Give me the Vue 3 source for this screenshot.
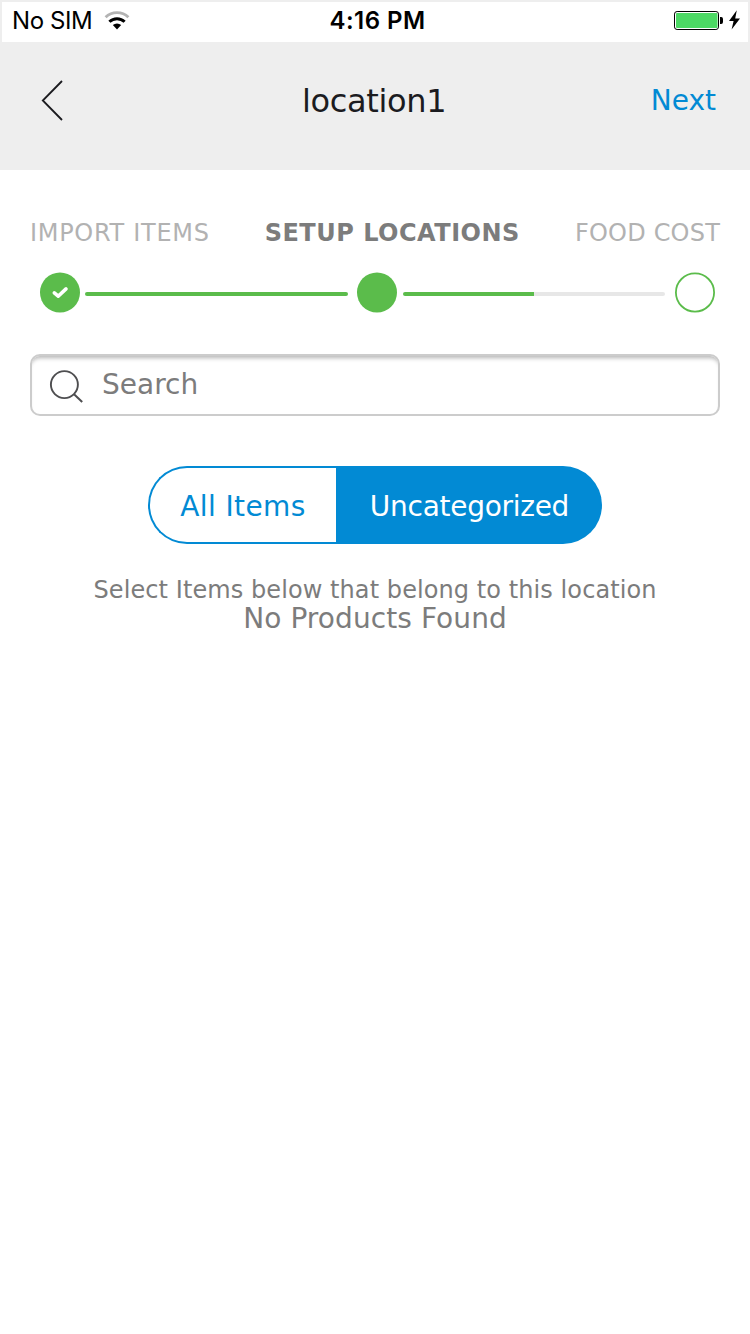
<script setup>
const steps = [
  { label: 'IMPORT ITEMS', name: 'import' },
  { label: 'SETUP LOCATIONS', name: 'setup' },
  { label: 'FOOD COST', name: 'cost' },
]
</script>

<template>
  <div class="screen">
    <div class="status">
      <div class="carrier">
        <span class="sim">No SIM</span>
        <svg class="wifi" width="26" height="20" viewBox="0 0 26 20">
          <path d="M1.6 6.2a16.4 16.4 0 0 1 22.8 0" fill="none" stroke="#b3b3b3" stroke-width="2.9" />
          <path d="M5.4 10.8a10.8 10.8 0 0 1 15.2 0" fill="none" stroke="#000" stroke-width="3" />
          <path d="M8.8 14.1a6.3 6.3 0 0 1 8.4 0L13 18.4z" fill="#000" />
        </svg>
      </div>
      <span class="time">4:16 PM</span>
      <svg class="battery" width="68" height="22" viewBox="0 0 68 22">
        <rect x="1.5" y="1.5" width="44" height="18" rx="2.6" fill="#fff" stroke="#000" />
        <rect x="3" y="3" width="41.5" height="15" rx="1" fill="#4cd964" />
        <path d="M47 7h1.2a2 2 0 0 1 1.8 2v3a2 2 0 0 1-1.8 2H47z" fill="#000" />
        <path d="M63.8 0.2 56 11h4.6L58.6 19.6 67 8.5h-4.8z" fill="#000" />
      </svg>
    </div>

    <header class="header">
      <svg class="back" width="24" height="44" viewBox="0 0 24 44">
        <path d="M22 2 2.8 21.5 22 41" fill="none" stroke="#1b1b1f" stroke-width="1.8" />
      </svg>
      <h1 class="title">location1</h1>
      <span class="next">Next</span>
    </header>

    <main class="content">
      <div class="labels">
        <span v-for="s in steps" :key="s.name" class="label" :class="s.name">{{ s.label }}</span>
      </div>

      <div class="progress">
        <svg class="dot" width="40" height="41" viewBox="0 0 40 41">
          <circle cx="20" cy="20.5" r="20" fill="#5bbc4b" />
          <path d="M14.3 21.2 18.2 24.5 26 17.2" transform="translate(0 -.3)" fill="none" stroke="#fff" stroke-width="3.6" stroke-linecap="round" stroke-linejoin="round" />
        </svg>
        <span class="bar full"></span>
        <svg class="dot" width="40" height="41" viewBox="0 0 40 41">
          <circle cx="20" cy="20.5" r="20" fill="#5bbc4b" />
        </svg>
        <span class="bar half"></span>
        <svg class="dot" width="40" height="41" viewBox="0 0 40 41">
          <circle cx="20" cy="20.5" r="19.1" fill="#fff" stroke="#5bbc4b" stroke-width="1.8" />
        </svg>
      </div>

      <div class="search">
        <svg width="36" height="36" viewBox="0 0 36 36">
          <circle cx="16.4" cy="17.6" r="13.5" fill="none" stroke="#4e4e50" stroke-width="1.9" />
          <path d="M25.8 27 34.2 35" stroke="#4e4e50" stroke-width="2" />
        </svg>
        <span class="placeholder">Search</span>
      </div>

      <div class="toggle">
        <span class="option all">All Items</span>
        <span class="option uncategorized">Uncategorized</span>
      </div>

      <p class="hint">Select Items below that belong to this location</p>
      <p class="none">No Products Found</p>
    </main>
  </div>
</template>

<style>
body { background: #fff; }
</style>

<style scoped>
.screen { width: 750px; height: 1334px; overflow: hidden; background: #fff; font-family: "DejaVu Sans", Verdana, sans-serif; white-space: nowrap; }
.status { box-sizing: border-box; height: 42px; border: 2px solid #eee; border-bottom: 0; padding: 0 7px 4px 10px; display: grid; grid-template-columns: 1fr auto 1fr; align-items: center; font: 24px/36px Inter, sans-serif; color: #000; }
.carrier { display: flex; align-items: center; gap: 11.5px; }
.sim { letter-spacing: -0.4px; padding-top: 1px; }
.time { font-weight: 600; letter-spacing: 0.45px; padding: 1px 0 0 2px; }
.battery { justify-self: end; }
.header { box-sizing: border-box; height: 128px; background: #eee; padding: 0 34px 10px 40px; display: grid; grid-template-columns: 262px 1fr auto; align-items: center; justify-items: start; }
.title { margin: 0; font-size: 32px; font-weight: 400; line-height: 40px; letter-spacing: -0.35px; color: #1b1b1f; }
.next { font-size: 28px; line-height: 40px; color: #028ad4; padding-bottom: 1px; }
.content { padding: 49px 30px 0; }
.labels { display: flex; justify-content: space-between; height: 29px; line-height: 29px; font-size: 24px; color: #b2b2b2; }
.import { letter-spacing: 0.7px; }
.setup { font-weight: 700; letter-spacing: 0.5px; color: #7c7c7c; }
.cost { letter-spacing: 0.2px; }
.progress { display: flex; align-items: center; height: 41px; margin: 24px 5px 0 10px; }
.dot { flex: none; }
.bar { height: 4px; border-radius: 2px; margin-top: 3px; }
.full { width: 263px; margin-left: 5px; margin-right: 9px; background: #5bbc4b; }
.half { width: 262px; margin-left: 6px; margin-right: 10px; background: linear-gradient(to right, #5bbc4b 50%, #e7e7e7 50%); }
.search { box-sizing: border-box; height: 62px; margin-top: 41px; border: 2px solid #ccc; border-radius: 10px; box-shadow: inset 0 5px 4px -3px #b5b5b5; display: flex; align-items: center; padding-left: 16px; gap: 18px; font-size: 28px; line-height: 40px; color: #7c7c7c; }
.toggle { display: flex; width: 454px; height: 78px; margin: 50px auto 0; font-size: 28px; line-height: 80px; }
.option { box-sizing: border-box; height: 78px; text-align: center; }
.all { width: 188px; border: 2px solid #028ad4; border-right: 0; border-radius: 39px 0 0 39px; line-height: 77px; letter-spacing: 0.4px; color: #028ad4; }
.uncategorized { flex: 1; border-radius: 0 39px 39px 0; padding-left: 1px; line-height: 81px; letter-spacing: -0.28px; background: #028ad4; color: #fff; }
.hint, .none { margin: 0; text-align: center; line-height: 29px; color: #7c7c7c; }
.hint { margin-top: 32px; font-size: 24px; letter-spacing: 0.08px; }
.none { margin-top: -1px; font-size: 28px; letter-spacing: 0.08px; }
</style>
